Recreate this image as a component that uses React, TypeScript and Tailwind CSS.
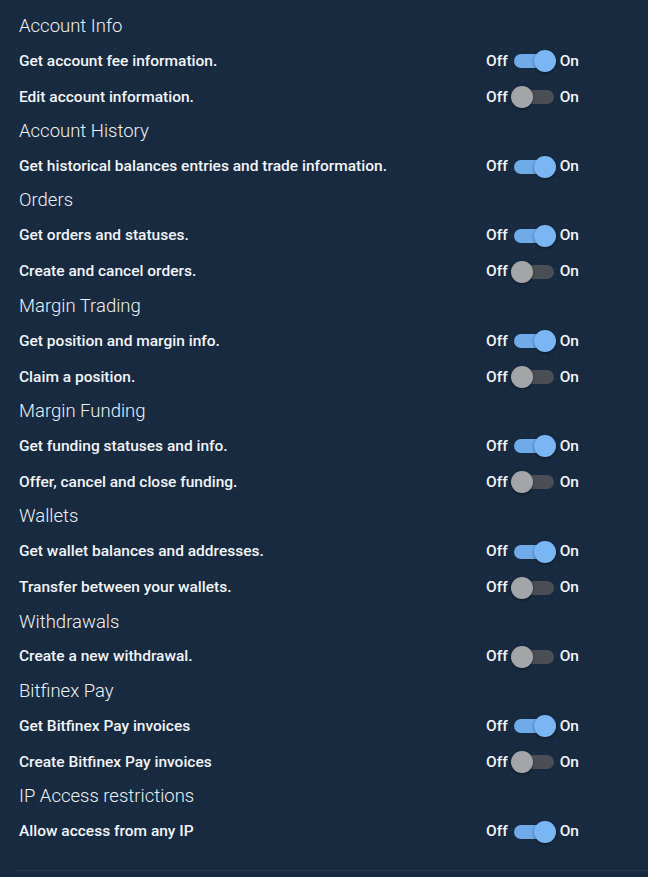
import React from "react";

type Item = { label: string; on: boolean };
type Section = { title: string; items: Item[] };

const sections: Section[] = [
  {
    title: "Account Info",
    items: [
      { label: "Get account fee information.", on: true },
      { label: "Edit account information.", on: false },
    ],
  },
  {
    title: "Account History",
    items: [{ label: "Get historical balances entries and trade information.", on: true }],
  },
  {
    title: "Orders",
    items: [
      { label: "Get orders and statuses.", on: true },
      { label: "Create and cancel orders.", on: false },
    ],
  },
  {
    title: "Margin Trading",
    items: [
      { label: "Get position and margin info.", on: true },
      { label: "Claim a position.", on: false },
    ],
  },
  {
    title: "Margin Funding",
    items: [
      { label: "Get funding statuses and info.", on: true },
      { label: "Offer, cancel and close funding.", on: false },
    ],
  },
  {
    title: "Wallets",
    items: [
      { label: "Get wallet balances and addresses.", on: true },
      { label: "Transfer between your wallets.", on: false },
    ],
  },
  {
    title: "Withdrawals",
    items: [{ label: "Create a new withdrawal.", on: false }],
  },
  {
    title: "Bitfinex Pay",
    items: [
      { label: "Get Bitfinex Pay invoices", on: true },
      { label: "Create Bitfinex Pay invoices", on: false },
    ],
  },
  {
    title: "IP Access restrictions",
    items: [{ label: "Allow access from any IP", on: true }],
  },
];

function Toggle({ on }: { on: boolean }) {
  return (
    <div className="flex items-center text-[15.5px] font-medium text-[#f2f4f7]">
      <span>Off</span>
      <div className="relative ml-[3px] mr-[3px] h-[24px] w-[46px]">
        <div
          className={
            on
              ? "absolute left-[3px] top-[5px] h-[14px] w-[40px] rounded-full bg-[#6faae9]"
              : "absolute left-[3px] top-[5px] h-[14px] w-[40px] rounded-full bg-[#4a4f56]"
          }
        />
        <div
          className={
            on
              ? "absolute left-[23px] top-[1px] h-[22px] w-[22px] rounded-full bg-[#7ab6f4] shadow-[0_1px_3px_rgba(0,0,0,0.45)]"
              : "absolute left-0 top-[1px] h-[22px] w-[22px] rounded-full bg-[#a3a5a8] shadow-[0_1px_3px_rgba(0,0,0,0.45)]"
          }
        />
      </div>
      <span>On</span>
    </div>
  );
}

export default function App() {
  return (
    <div
      className="min-h-[877px] w-full bg-[#172a3f] pt-[10px] text-[#f2f4f7]"
      style={{ fontFamily: "Roboto, 'Noto Sans', sans-serif" }}
    >
      <div className="bg-[radial-gradient(circle,rgba(120,150,190,0.09)_0.8px,transparent_1.2px)] bg-[size:11px_11px]">
        <div className="ml-[15px] border-b border-[#26384d] pb-[20px]">
          <div className="w-[564px] pl-[4px]">
            {sections.map((s) => (
              <div key={s.title}>
                <div className="flex h-[33.3px] items-center text-[18.5px] font-light text-[#eef1f5]">
                  {s.title}
                </div>
                {s.items.map((it) => (
                  <div key={it.label} className="flex h-[36px] items-center justify-between">
                    <span className="text-[15.5px] font-medium text-[#f2f4f7]">{it.label}</span>
                    <Toggle on={it.on} />
                  </div>
                ))}
              </div>
            ))}
          </div>
        </div>
      </div>
    </div>
  );
}
